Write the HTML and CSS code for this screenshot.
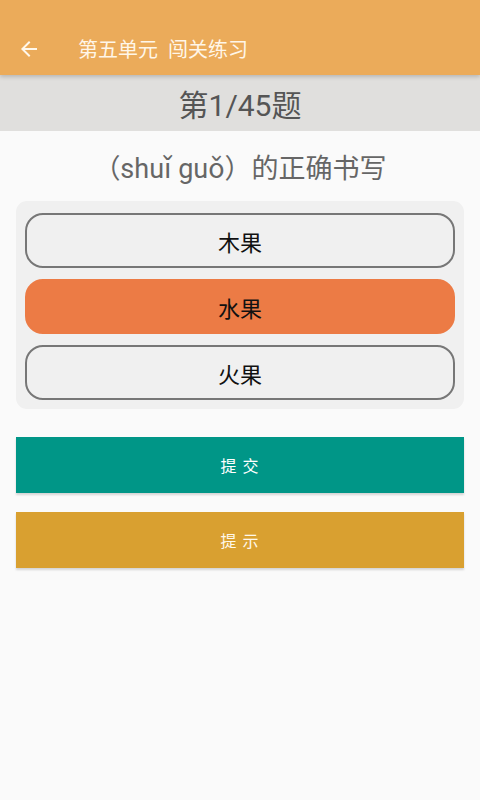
FILE: index.html
```html
<!DOCTYPE html>
<html lang="zh">
<head>
<meta charset="utf-8">
<title>第五单元 闯关练习</title>
<link rel="stylesheet" href="styles.css">
</head>
<body>
<div class="app">
  <header class="toolbar">
    <svg class="back" width="24" height="24" viewBox="0 0 24 24"><path d="M20 11H7.83l5.59-5.59L12 4l-8 8 8 8 1.41-1.41L7.83 13H20v-2z" fill="#fff8ec"/></svg>
    <span class="title">第五单元<span class="gap"> </span>闯关练习</span>
  </header>
  <div class="progress">第1/45题</div>
  <div class="question">（shuǐ guǒ）的正确书写</div>
  <div class="options">
    <div class="option">木果</div>
    <div class="option selected">水果</div>
    <div class="option">火果</div>
  </div>
  <div class="actions">
    <div class="btn submit">提 交</div>
    <div class="btn hint">提 示</div>
  </div>
</div>
</body>
</html>
```
FILE: styles.css
```css
html, body {
  margin: 0;
  padding: 0;
  background: #fafafa;
  font-family: Roboto, "Noto Sans CJK SC", sans-serif;
}
.app {
  width: 480px;
  height: 800px;
  display: flex;
  flex-direction: column;
  background: #fafafa;
}
.toolbar {
  height: 75px;
  background: #ebab5a;
  display: flex;
  align-items: center;
  box-shadow: 0 2px 4px rgba(0,0,0,0.18);
  position: relative;
  z-index: 1;
  box-sizing: border-box;
  padding-top: 22px;
}
.back {
  margin-left: 17px;
  width: 24px;
  height: 24px;
}
.title {
  margin-left: 37px;
  color: #fff6e8;
  font-size: 20px;
  font-family: Roboto, "Noto Sans CJK SC", sans-serif;
}
.gap {
  display: inline-block;
  width: 10px;
}
.progress {
  height: 56px;
  background: #e0dfdd;
  display: flex;
  align-items: center;
  justify-content: center;
  font-size: 30px;
  color: #555555;
  font-family: Roboto, "Noto Sans CJK SC", sans-serif;
}
.question {
  height: 70px;
  display: flex;
  align-items: center;
  justify-content: center;
  font-size: 27px;
  color: #666666;
  font-family: Roboto, "Noto Sans CJK SC", sans-serif;
}
.options {
  margin: 0 16px;
  background: #f0f0f0;
  border-radius: 11px;
  padding: 12px 9px 9px 9px;
  display: flex;
  flex-direction: column;
  gap: 11px;
}
.option {
  height: 55px;
  box-sizing: border-box;
  border: 2px solid #777777;
  border-radius: 18px;
  display: flex;
  align-items: center;
  justify-content: center;
  font-size: 22px;
  color: #111111;
  font-family: Roboto, "Noto Sans CJK SC", sans-serif;
  background: #f0f0f0;
}
.option.selected {
  background: #ec7b45;
  border-color: #ec7b45;
}
.actions {
  margin: 28px 16px 0 16px;
  display: flex;
  flex-direction: column;
  gap: 19px;
}
.btn {
  height: 56px;
  display: flex;
  align-items: center;
  justify-content: center;
  color: #ffffff;
  font-size: 16px;
  letter-spacing: 1px;
  font-family: Roboto, "Noto Sans CJK SC", sans-serif;
  box-shadow: 0 2px 2px rgba(0,0,0,0.15);
}
.submit {
  background: #009687;
}
.hint {
  background: #d9a030;
  color: #fff8ea;
}
```
